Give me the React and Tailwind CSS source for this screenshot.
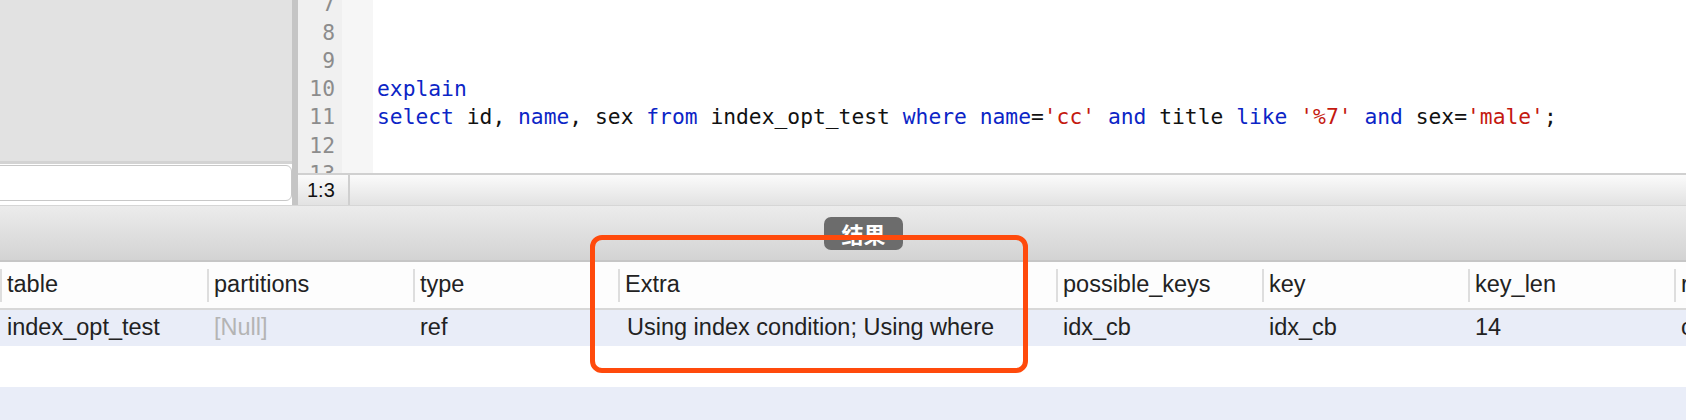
const mono = { fontFamily: '"DejaVu Sans Mono", monospace' }

const lines = [
  { n: 7, parts: [] },
  { n: 8, parts: [] },
  { n: 9, parts: [] },
  { n: 10, parts: [["k", "explain"]] },
  {
    n: 11,
    parts: [
      ["k", "select"], ["t", " id, "], ["k", "name"], ["t", ", sex "], ["k", "from"],
      ["t", " index_opt_test "], ["k", "where"], ["t", " "], ["k", "name"], ["t", "="],
      ["s", "'cc'"], ["t", " "], ["k", "and"], ["t", " title "], ["k", "like"], ["t", " "],
      ["s", "'%7'"], ["t", " "], ["k", "and"], ["t", " sex="], ["s", "'male'"], ["t", ";"],
    ],
  },
  { n: 12, parts: [] },
  { n: 13, parts: [] },
]

const tokenColor = { k: "text-[#0c25c6]", s: "text-[#c4190f]", t: "text-[#111]" }

const columns = [
  { name: "table", value: "index_opt_test", w: "w-[207px]" },
  { name: "partitions", value: "[Null]", w: "w-[206px]", nul: true },
  { name: "type", value: "ref", w: "w-[205px]" },
  { name: "Extra", value: "Using index condition; Using where", w: "w-[438px]", pad: "pl-[9px]" },
  { name: "possible_keys", value: "idx_cb", w: "w-[206px]" },
  { name: "key", value: "idx_cb", w: "w-[206px]" },
  { name: "key_len", value: "14", w: "w-[206px]" },
  { name: "ref", value: "const", w: "w-[206px]" },
]

function Editor() {
  return (
    <div className="flex h-[205px]">
      {/* left navigator */}
      <div className="flex w-[292px] shrink-0 flex-col">
        <div className="h-[161px] bg-[#e2e2e2]" />
        <div className="h-[3px] bg-[#d3d3d3]" />
        <div className="flex-1 bg-white pt-[1px]">
          <div className="-ml-[10px] h-[36px] rounded-md border border-[#c8c8c8] bg-white" />
        </div>
      </div>
      <div className="w-[6px] shrink-0 bg-[#c5c5c5]" />

      {/* code area */}
      <div className="flex min-w-0 flex-1 flex-col">
        <div className="flex h-[173px] overflow-hidden bg-white" style={mono}>
          <div className="w-[44px] shrink-0 bg-[#f0f0f0]" />
          <div className="w-[31px] shrink-0 bg-[#f6f6f6]" />
          <div className="-ml-[75px] mt-[-9.8px] flex-1">
            {lines.map((l) => (
              <div key={l.n} className="flex h-[28.3px] items-center text-[21.3px] leading-[28.3px]">
                <span className="w-[37px] shrink-0 text-right text-[#8c8c8c]">{l.n}</span>
                <span className="ml-[42px] whitespace-pre">
                  {l.parts.map(([t, s], i) => (
                    <span key={i} className={tokenColor[t]}>{s}</span>
                  ))}
                </span>
              </div>
            ))}
          </div>
        </div>
        <div className="flex flex-1 border-t-2 border-[#d0d0d0] bg-gradient-to-b from-[#fbfbfb] to-[#e2e2e2]">
          <div
            className="flex w-[52px] items-center border-r-2 border-[#cfcfcf] pl-[9px] text-[20px] text-[#111]"
            style={{ fontFamily: '"Liberation Sans", sans-serif' }}
          >
            1:3
          </div>
        </div>
      </div>
    </div>
  )
}

function ResultBar() {
  return (
    <div className="flex h-[57px] items-start border-t border-[#d6d6d6] border-b-2 border-b-[#c6c6c6] bg-gradient-to-b from-[#ececec] to-[#d3d3d3] pl-[824px] pt-[11px]">
      <div
        className="flex h-[33px] w-[79px] items-center justify-center rounded-[7px] bg-[#6c6c6c] text-[22px] font-bold text-white"
        style={{ fontFamily: '"Noto Sans CJK SC", sans-serif' }}
      >
        结果
      </div>
    </div>
  )
}

function Grid() {
  return (
    <div className="text-[23.5px] text-[#222]" style={{ fontFamily: '"Liberation Sans", Arial, sans-serif' }}>
      <div className="flex h-[48px] items-center border-b-2 border-[#d8d8d8] bg-[#fdfdfd]">
        {columns.map((c) => (
          <div key={c.name} className={`${c.w} shrink-0 flex h-[33px] items-center border-l-2 border-[#dedede] pl-[5px]`}>
            {c.name}
          </div>
        ))}
      </div>
      <div className="flex h-[36px] items-center bg-[#e9edf8]">
        {columns.map((c) => (
          <div
            key={c.name}
            className={`${c.w} shrink-0 whitespace-nowrap ${c.pad || "pl-[7px]"} ${c.nul ? "text-[#b4b4b4]" : ""}`}
          >
            {c.value}
          </div>
        ))}
      </div>
      <div className="h-[41px] bg-white" />
      <div className="h-[33px] bg-[#e9edf8]" />
    </div>
  )
}

export default function App() {
  return (
    <div className="relative h-[420px] w-[1686px] overflow-hidden bg-white">
      <Editor />
      <ResultBar />
      <Grid />
      {/* annotation box */}
      <div className="absolute left-[590px] top-[235px] h-[138px] w-[438px] rounded-[12px] border-[5px] border-[#ff4a0c]" />
    </div>
  )
}
